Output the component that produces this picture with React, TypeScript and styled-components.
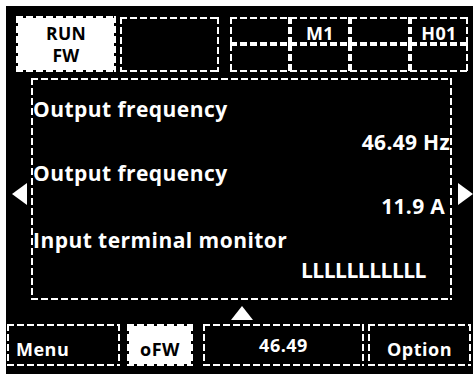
import React from "react";
import styled, { createGlobalStyle, css } from "styled-components";

const GlobalStyle = createGlobalStyle`
  html, body { margin: 0; padding: 0; background: #ffffff; }
  body { font-family: "Open Sans", "Liberation Sans", sans-serif; }
`;

const dash = (dir: string) =>
  `repeating-linear-gradient(${dir}, #fff 0 7px, transparent 7px 10px)`;

const dashedFrame = (filled: boolean) => css`
  background:
    ${dash("90deg")} top left / 100% 2px no-repeat,
    ${dash("90deg")} bottom left / 100% 2px no-repeat,
    ${dash("180deg")} top left / 2px 100% no-repeat,
    ${dash("180deg")} top right / 2px 100% no-repeat
    ${filled ? ", linear-gradient(#fff, #fff) center / calc(100% - 4px) calc(100% - 4px) no-repeat" : ""};
`;

const Screen = styled.div`
  margin: 6px 0 0 6px;
  width: 467px;
  height: 368px;
  background: #000;
  color: #fff;
  font-weight: 700;
  display: flex;
  flex-direction: column;
  overflow: hidden;
`;

const TopBar = styled.div`
  display: flex;
  align-items: flex-start;
  margin: 10px 0 0 10px;
  height: 56px;
`;

const Box = styled.div<{ $filled?: boolean; $w: number; $h: number; $ml?: number; $mt?: number }>`
  ${(p) => dashedFrame(!!p.$filled)}
  box-sizing: border-box;
  width: ${(p) => p.$w}px;
  height: ${(p) => p.$h}px;
  margin-left: ${(p) => p.$ml ?? 0}px;
  margin-top: ${(p) => p.$mt ?? 0}px;
  color: ${(p) => (p.$filled ? "#000" : "#fff")};
`;

const RunBox = styled(Box)`
  display: flex;
  flex-direction: column;
  align-items: center;
  justify-content: center;
  font-size: 17.5px;
  line-height: 22px;
  letter-spacing: 0.3px;
`;

const StatusGrid = styled.div`
  display: grid;
  grid-template-columns: 60px 60px 60px 58px;
  grid-template-rows: 27px 28px;
  margin: 1px 0 0 11px;
`;

const Cell = styled.div`
  ${dashedFrame(false)}
  box-sizing: border-box;
  display: flex;
  align-items: center;
  justify-content: center;
  font-size: 18px;
  line-height: 20px;
  padding-top: 4px;
  letter-spacing: 0.3px;
`;

const MiddleRow = styled.div`
  display: flex;
  align-items: flex-start;
  margin-top: 6px;
  height: 222px;
`;

const SideArrow = styled.div<{ $dir: "left" | "right" }>`
  width: 0;
  height: 0;
  margin-top: 105px;
  border-top: 11px solid transparent;
  border-bottom: 11px solid transparent;
  ${(p) =>
    p.$dir === "left"
      ? css`
          border-right: 15px solid #fff;
          margin-left: 6px;
          margin-right: 4px;
        `
      : css`
          border-left: 15px solid #fff;
          margin-left: 6px;
        `}
`;

const Panel = styled.div`
  ${dashedFrame(false)}
  box-sizing: border-box;
  width: 421px;
  height: 222px;
  padding: 2px;
  display: flex;
  flex-direction: column;
`;

const Label = styled.div<{ $mt: number }>`
  font-size: 21px;
  line-height: 24px;
  letter-spacing: 0.45px;
  margin-top: ${(p) => p.$mt}px;
  white-space: nowrap;
`;

const Value = styled.div<{ $mt: number; $pr: number; $ls?: number }>`
  align-self: flex-end;
  font-size: 21px;
  line-height: 24px;
  letter-spacing: ${(p) => p.$ls ?? 0.3}px;
  margin-top: ${(p) => p.$mt}px;
  padding-right: ${(p) => p.$pr}px;
  white-space: nowrap;
`;

const UpArrow = styled.div`
  width: 0;
  height: 0;
  border-left: 11px solid transparent;
  border-right: 11px solid transparent;
  border-bottom: 14px solid #fff;
  margin: 6px 0 0 225px;
`;

const BottomBar = styled.div`
  display: flex;
  margin: 4px 0 0 1px;
`;

const SoftKey = styled(Box)<{ $align?: "left" | "center"; $pt: number }>`
  display: flex;
  justify-content: ${(p) => (p.$align === "left" ? "flex-start" : "center")};
  padding: ${(p) => p.$pt}px 0 0 ${(p) => (p.$align === "left" ? 9 : 0)}px;
  font-size: 18px;
  line-height: 22px;
  letter-spacing: 0.5px;
`;

export default function App() {
  return (
    <>
      <GlobalStyle />
      <Screen>
        <TopBar>
          <RunBox $filled $w={100} $h={56}>
            <span>RUN</span>
            <span>FW</span>
          </RunBox>
          <Box $w={99} $h={55} $ml={4} $mt={1} />
          <StatusGrid>
            <Cell />
            <Cell>M1</Cell>
            <Cell />
            <Cell>H01</Cell>
            <Cell />
            <Cell />
            <Cell />
            <Cell />
          </StatusGrid>
        </TopBar>
        <MiddleRow>
          <SideArrow $dir="left" />
          <Panel>
            <Label $mt={17}>Output frequency</Label>
            <Value $mt={9} $pr={0}>46.49 Hz</Value>
            <Label $mt={7}>Output frequency</Label>
            <Value $mt={9} $pr={5}>11.9 A</Value>
            <Label $mt={10}>Input terminal monitor</Label>
            <Value $mt={6} $pr={24} $ls={-0.5}>LLLLLLLLLLL</Value>
          </Panel>
          <SideArrow $dir="right" />
        </MiddleRow>
        <UpArrow />
        <BottomBar>
          <SoftKey $w={113} $h={42} $align="left" $pt={14}>Menu</SoftKey>
          <SoftKey $filled $w={66} $h={42} $ml={7} $pt={14}>oFW</SoftKey>
          <SoftKey $w={161} $h={42} $ml={10} $pt={10}>46.49</SoftKey>
          <SoftKey $w={103} $h={42} $ml={4} $pt={14}>Option</SoftKey>
        </BottomBar>
      </Screen>
    </>
  );
}
